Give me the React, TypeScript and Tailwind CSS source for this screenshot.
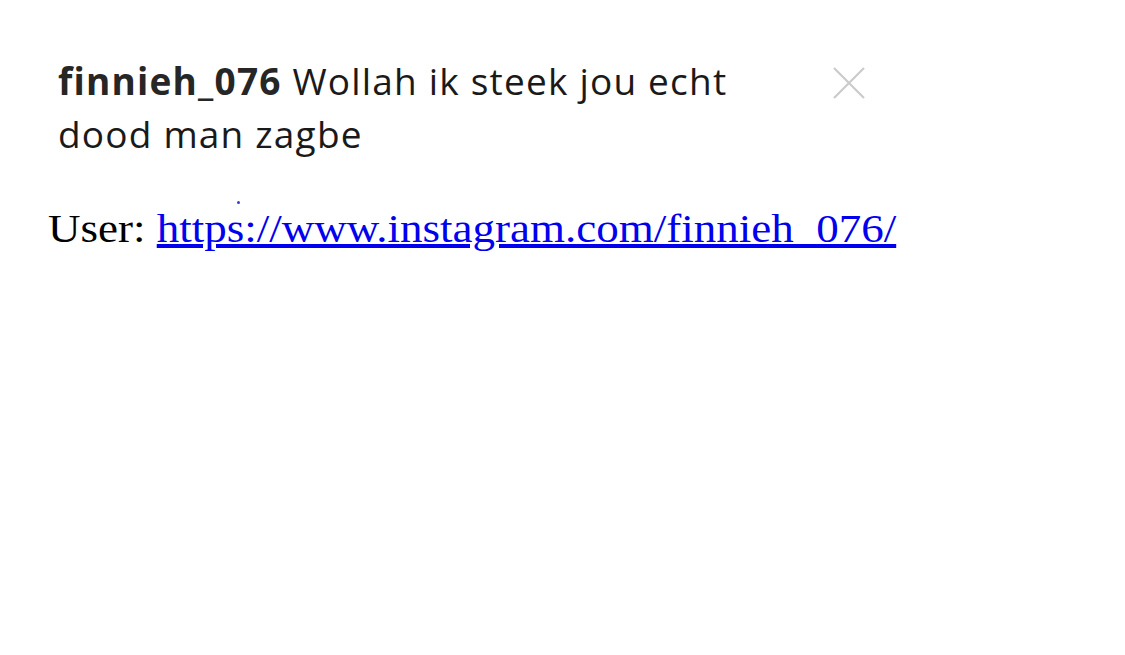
export default function App() {
  return (
    <div className="min-h-[655px] w-[1125px] overflow-hidden bg-white">
      <div className="flex items-start pl-[58px] pt-[54px]">
        <p
          className="w-[690px] text-[37px] leading-[53px] tracking-[1.2px] text-[#1a1a1a]"
          style={{ fontFamily: '"Open Sans", "DejaVu Sans", sans-serif' }}
        >
          <span className="font-bold text-[#262626]">finnieh_076</span> Wollah ik steek jou echt dood man zagbe
        </p>
        <svg width="34" height="34" viewBox="0 0 34 34" className="ml-[84px] mt-[12px]">
          <path d="M2 2 L32 32 M32 2 L2 32" stroke="#cbcbcb" strokeWidth="2.2" fill="none" />
        </svg>
      </div>
      <div className="relative mt-[47px] pl-[48px]">
        <span className="absolute left-[237px] top-[-6px] h-[3px] w-[3px] rounded-full bg-[#3b3bd9]" />
        <p
          className="w-fit origin-left scale-x-[1.125] whitespace-nowrap text-[40px] leading-[44px] text-black"
          style={{ fontFamily: '"Liberation Serif", "Times New Roman", serif' }}
        >
          User:{' '}
          <a href="#" className="text-[#0000ee] underline">
            https://www.instagram.com/finnieh_076/
          </a>
        </p>
      </div>
    </div>
  )
}
